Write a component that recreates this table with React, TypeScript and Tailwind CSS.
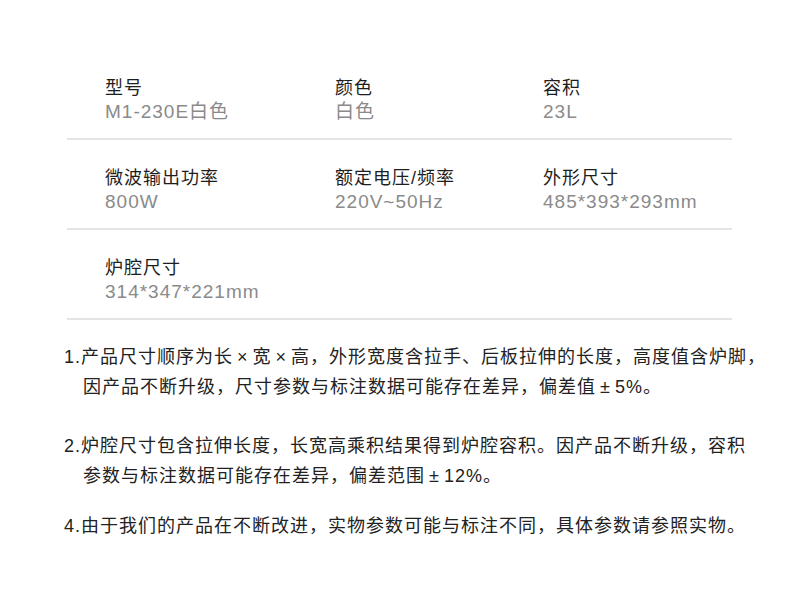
import React from "react";

const rows: { label: string; value: string }[][] = [
  [
    { label: "型号", value: "M1-230E白色" },
    { label: "颜色", value: "白色" },
    { label: "容积", value: "23L" },
  ],
  [
    { label: "微波输出功率", value: "800W" },
    { label: "额定电压/频率", value: "220V~50Hz" },
    { label: "外形尺寸", value: "485*393*293mm" },
  ],
  [{ label: "炉腔尺寸", value: "314*347*221mm" }],
];

function Sym({ c }: { c: string }) {
  return <span className="mx-[4px]">{c}</span>;
}

export default function App() {
  return (
    <div
      className="w-[790px] h-[602px] bg-white overflow-hidden"
      style={{ fontFamily: '"Liberation Sans", "Noto Sans CJK SC", sans-serif' }}
    >
      <div className="pt-[50px] pl-[67px] w-[732px]">
        {rows.map((row, i) => (
          <div
            key={i}
            className="grid grid-cols-[230px_208px_1fr] pl-[38px] pt-[26px] pb-[14px] border-b-2 border-[#e4e4e4]"
          >
            {row.map((c, j) => (
              <div key={j} className="flex flex-col">
                <div className="text-[18px] leading-[24px] tracking-[1px] text-[#1e1e1e]">
                  {c.label}
                </div>
                <div className="text-[19px] leading-[24px] tracking-[1px] text-[#8a8a8a]">
                  {c.value}
                </div>
              </div>
            ))}
          </div>
        ))}
      </div>
      <div className="mt-[22px] pl-[64px] flex flex-col text-[18px] leading-[30px] tracking-[1px] text-[#222]">
        <div>
          <div className="whitespace-nowrap">
            1.产品尺寸顺序为长<Sym c="×" />宽<Sym c="×" />高，外形宽度含拉手、后板拉伸的长度，高度值含炉脚，
          </div>
          <div className="whitespace-nowrap pl-[19px]">
            因产品不断升级，尺寸参数与标注数据可能存在差异，偏差值<Sym c="±" />5%。
          </div>
        </div>
        <div className="mt-[29px]">
          <div className="whitespace-nowrap">
            2.炉腔尺寸包含拉伸长度，长宽高乘积结果得到炉腔容积。因产品不断升级，容积
          </div>
          <div className="whitespace-nowrap pl-[19px]">
            参数与标注数据可能存在差异，偏差范围<Sym c="±" />12%。
          </div>
        </div>
        <div className="mt-[20px]">
          <div className="whitespace-nowrap">
            4.由于我们的产品在不断改进，实物参数可能与标注不同，具体参数请参照实物。
          </div>
        </div>
      </div>
    </div>
  );
}
